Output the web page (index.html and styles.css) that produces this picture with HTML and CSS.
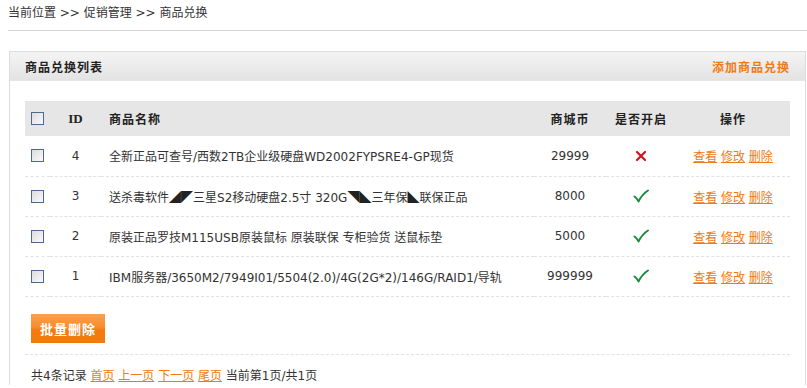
FILE: index.html
```html
<!DOCTYPE html>
<html lang="zh-CN">
<head>
    <meta charset="UTF-8">
    <title>商品兑换</title>
    <link rel="stylesheet" href="styles.css">
</head>
<body>

    <div class="crumb">当前位置 &gt;&gt; 促销管理 &gt;&gt; 商品兑换</div>

    <div class="panel">
        <div class="panel-head">
            <span class="panel-title">商品兑换列表</span>
            <a href="#" class="add-link">添加商品兑换</a>
        </div>

        <div class="panel-body">
            <table class="list">
                <thead>
                    <tr>
                        <th class="c-check"><input type="checkbox"></th>
                        <th class="c-id id-head">ID</th>
                        <th class="c-name">商品名称</th>
                        <th class="c-coin">商城币</th>
                        <th class="c-open">是否开启</th>
                        <th class="c-op">操作</th>
                    </tr>
                </thead>
                <tbody>
                    <tr>
                        <td class="c-check"><input type="checkbox"></td>
                        <td class="c-id">4</td>
                        <td class="c-name">全新正品可查号/西数2TB企业级硬盘WD2002FYPSRE4-GP现货</td>
                        <td class="c-coin">29999</td>
                        <td class="c-open">
                            <svg class="mark" width="12" height="12" viewBox="0 0 12 12"><path d="M2 2 L10 10 M10 2 L2 10" stroke="#d0141e" stroke-width="2.2" stroke-linecap="round"/></svg>
                        </td>
                        <td class="c-op"><a href="#">查看</a> <a href="#">修改</a> <a href="#">删除</a></td>
                    </tr>
                    <tr>
                        <td class="c-check"><input type="checkbox"></td>
                        <td class="c-id">3</td>
                        <td class="c-name">送杀毒软件<span class="sym">◢◤</span>三星S2移动硬盘2.5寸 320G<span class="sym">◥◣</span>三年保<span class="sym">◣</span>联保正品</td>
                        <td class="c-coin">8000</td>
                        <td class="c-open">
                            <svg class="mark" width="16" height="14" viewBox="0 0 16 14"><path d="M1.5 7.5 C3 8.5 4.5 10 5.5 12.5 C8 7.5 11 4 15 1.5" fill="none" stroke="#1f8a3c" stroke-width="2" stroke-linecap="round" stroke-linejoin="round"/></svg>
                        </td>
                        <td class="c-op"><a href="#">查看</a> <a href="#">修改</a> <a href="#">删除</a></td>
                    </tr>
                    <tr>
                        <td class="c-check"><input type="checkbox"></td>
                        <td class="c-id">2</td>
                        <td class="c-name">原装正品罗技M115USB原装鼠标 原装联保 专柜验货 送鼠标垫</td>
                        <td class="c-coin">5000</td>
                        <td class="c-open">
                            <svg class="mark" width="16" height="14" viewBox="0 0 16 14"><path d="M1.5 7.5 C3 8.5 4.5 10 5.5 12.5 C8 7.5 11 4 15 1.5" fill="none" stroke="#1f8a3c" stroke-width="2" stroke-linecap="round" stroke-linejoin="round"/></svg>
                        </td>
                        <td class="c-op"><a href="#">查看</a> <a href="#">修改</a> <a href="#">删除</a></td>
                    </tr>
                    <tr>
                        <td class="c-check"><input type="checkbox"></td>
                        <td class="c-id">1</td>
                        <td class="c-name">IBM服务器/3650M2/7949I01/5504(2.0)/4G(2G*2)/146G/RAID1/导轨</td>
                        <td class="c-coin">999999</td>
                        <td class="c-open">
                            <svg class="mark" width="16" height="14" viewBox="0 0 16 14"><path d="M1.5 7.5 C3 8.5 4.5 10 5.5 12.5 C8 7.5 11 4 15 1.5" fill="none" stroke="#1f8a3c" stroke-width="2" stroke-linecap="round" stroke-linejoin="round"/></svg>
                        </td>
                        <td class="c-op"><a href="#">查看</a> <a href="#">修改</a> <a href="#">删除</a></td>
                    </tr>
                </tbody>
            </table>

            <div class="actions">
                <button type="button" class="btn-del">批量删除</button>
            </div>

            <div class="pager">
                共4条记录 <a href="#">首页</a> <a href="#">上一页</a> <a href="#">下一页</a> <a href="#">尾页</a> 当前第1页/共1页
            </div>
        </div>
    </div>

</body>
</html>
```

FILE: styles.css
```css
/* reset */
* {
    margin: 0;
    padding: 0;
    box-sizing: border-box;
}

body {
    font-family: 'DejaVu Sans', 'Noto Sans CJK SC', sans-serif;
    font-size: 12px;
    color: #333;
    background: #fff;
}

a {
    color: #ee7a12;
}

/* breadcrumb */
.crumb {
    margin-left: 8px;
    padding: 4px 0 8px;
    line-height: 18px;
    border-bottom: 1px solid #d4d4d4;
    color: #333;
}

/* panel */
.panel {
    margin: 20px 1px 0 9px;
    border: 1px solid #dcdcdc;
    border-bottom: none;
}

.panel-head {
    display: flex;
    justify-content: space-between;
    align-items: center;
    height: 29px;
    padding: 0 15px;
    background: linear-gradient(#f4f4f4, #e3e3e3);
    border-bottom: 1px solid #e6e6e6;
}

.panel-title {
    font-weight: bold;
    letter-spacing: 1px;
    color: #222;
}

.add-link {
    font-weight: bold;
    letter-spacing: 1px;
    text-decoration: none;
    color: #f07a14;
}

.panel-body {
    padding: 20px 15px 0;
}

/* table */
.list {
    width: 100%;
    border-collapse: collapse;
    table-layout: fixed;
}

.list th {
    height: 35px;
    background: #e6e6e6;
    font-weight: bold;
    letter-spacing: 1px;
    color: #222;
}

.list .id-head {
    font-family: 'Liberation Serif', serif;
    font-size: 13px;
    letter-spacing: 0;
}

.list td {
    height: 40px;
    border-bottom: 1px dashed #e2e2e2;
}

.list input[type="checkbox"] {
    appearance: none;
    display: block;
    width: 13px;
    height: 13px;
    margin: 0 auto;
    border: 1px solid #4c6a8c;
    background: linear-gradient(135deg, #dcdcdc, #fafafa);
}

.c-check {
    width: 25px;
}

.c-id {
    width: 51px;
    text-align: center;
}

.c-name {
    text-align: left;
    padding-left: 8px;
}

.c-coin {
    width: 72px;
    text-align: center;
}

.c-open {
    width: 70px;
    text-align: center;
}

.c-op {
    width: 114px;
    text-align: center;
}

.mark {
    display: block;
    margin: 0 auto;
}

.sym {
    font-family: 'Noto Sans CJK SC', sans-serif;
    color: #222;
}

/* bottom actions */
.actions {
    padding: 17px 0 11px 6px;
    border-bottom: 1px dashed #e2e2e2;
}

.btn-del {
    width: 74px;
    height: 29px;
    border: none;
    background: linear-gradient(#f9a04e 0%, #f88e2c 45%, #f57a0c 55%, #f47a0e 100%);
    color: #fff;
    font-family: 'Noto Sans CJK SC', sans-serif;
    font-size: 13px;
    font-weight: bold;
    letter-spacing: 1px;
    cursor: pointer;
}

.pager {
    padding: 12px 0 0 6px;
    line-height: 18px;
}
```
